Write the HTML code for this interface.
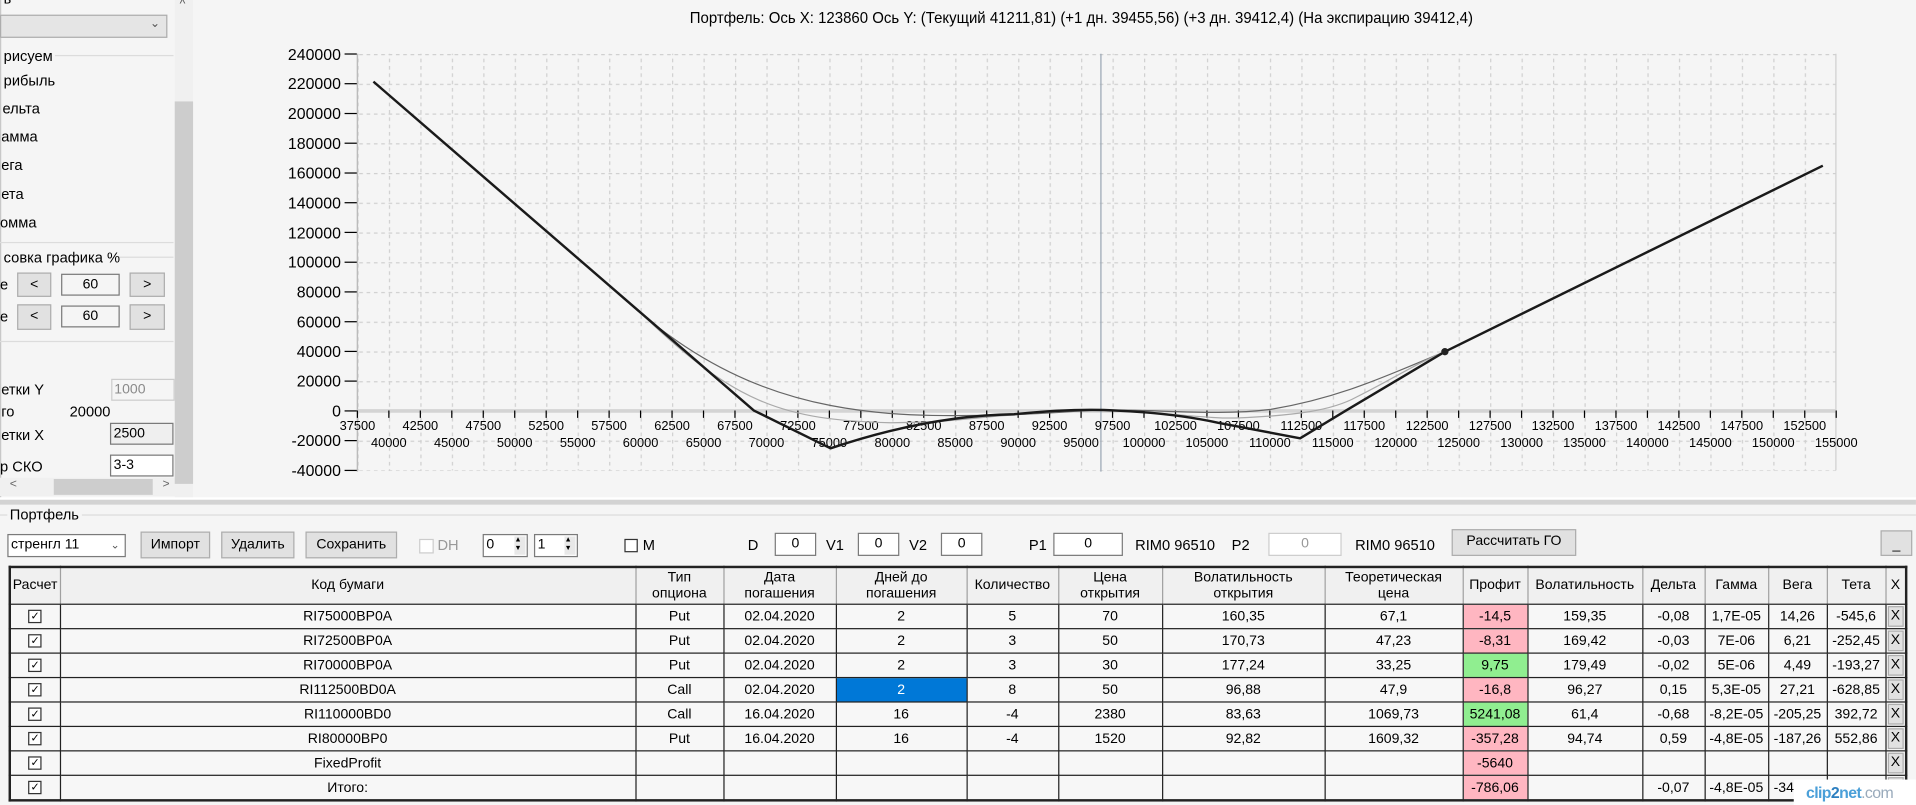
<!DOCTYPE html>
<html><head><meta charset="utf-8">
<style>
html,body{margin:0;padding:0;width:1916px;height:805px;overflow:hidden;background:#f5f5f5;}
.s{position:absolute;left:0;top:0;width:1568px;height:659px;transform:scale(1.2219);transform-origin:0 0;font-family:"Liberation Sans","DejaVu Sans",sans-serif;font-size:12px;color:#000;background:#f5f5f5;}
.a{position:absolute;white-space:nowrap;}
.btn{position:absolute;background:#e1e1e1;border:1px solid #adadad;box-sizing:border-box;text-align:center;font-size:11.5px;}
.inp{position:absolute;background:#fff;border:1px solid #7a7a7a;box-sizing:border-box;text-align:center;font-size:11.5px;}
.line{position:absolute;height:1px;background:#dcdcdc;}
table{position:absolute;left:7px;top:463px;border-collapse:collapse;table-layout:fixed;font-size:11.5px;border:2px solid #222;}
td{border:1px solid #222;text-align:center;padding:0;height:19px;line-height:14px;background:#f7f7f7;overflow:hidden;white-space:nowrap;}
tr.h td{background:#f0f0f0;height:29px;line-height:13px;border-color:#222 #a0a0a0;}
td.p{background:#ffb6c1;}
td.g{background:#90ee90;}
td.sel{background:#0078d7;color:#fff;}
td.x{padding:0 1px;}
td.x span{display:block;background:#e1e1e1;border:1px solid #adadad;height:15px;line-height:15px;}
.cb{display:inline-block;width:9px;height:9px;border:1px solid #333;background:#fff;font-size:9px;line-height:9px;vertical-align:middle;}
</style></head><body>
<div class="s">
<!-- left panel -->
<div class="a" style="left:0;top:0;width:143px;height:407px;background:#f5f5f5;"></div>
<div class="a" style="left:0;top:0;width:1px;height:407px;background:#c8c8c8;"></div>
<div class="a" style="left:3px;top:-8px;font-size:12px;">ь</div>
<div class="a" style="left:0;top:11.5px;width:137px;height:19px;background:#e5e5e5;border:1px solid #adadad;box-sizing:border-box;"><span style="position:absolute;right:5px;top:1px;font-size:10px;color:#555;">&#8964;</span></div>
<div class="line" style="left:45px;top:44.5px;width:97px;"></div>
<div class="a" style="left:3px;top:39px;">рисуем</div>
<div class="a" style="left:3px;top:59px;">рибыль</div>
<div class="a" style="left:2px;top:82px;">ельта</div>
<div class="a" style="left:1px;top:105px;">амма</div>
<div class="a" style="left:1px;top:128px;">ега</div>
<div class="a" style="left:1px;top:152px;">ета</div>
<div class="a" style="left:0px;top:175px;">омма</div>
<div class="line" style="left:0;top:198px;width:142px;"></div>
<div class="line" style="left:97px;top:210px;width:45px;"></div>
<div class="a" style="left:3px;top:204px;">совка графика %</div>
<div class="a" style="left:0px;top:226px;">е</div>
<div class="btn" style="left:14px;top:223px;width:28px;height:20px;line-height:18px;">&lt;</div>
<div class="inp" style="left:50px;top:224px;width:48px;height:18px;line-height:16px;background:#f5f5f5;">60</div>
<div class="btn" style="left:106px;top:223px;width:29px;height:20px;line-height:18px;">&gt;</div>
<div class="a" style="left:0px;top:252px;">е</div>
<div class="btn" style="left:14px;top:249px;width:28px;height:21px;line-height:19px;">&lt;</div>
<div class="inp" style="left:50px;top:250px;width:48px;height:18px;line-height:16px;background:#f5f5f5;">60</div>
<div class="btn" style="left:106px;top:249px;width:29px;height:21px;line-height:19px;">&gt;</div>
<div class="line" style="left:0;top:279px;width:142px;"></div>
<div class="a" style="left:1px;top:312px;">етки Y</div>
<div class="inp" style="left:90.5px;top:309.5px;width:52px;height:18px;line-height:16px;text-align:left;padding-left:2px;color:#8a8a8a;border-color:#ccc;background:#f5f5f5;">1000</div>
<div class="a" style="left:1px;top:330px;">го</div>
<div class="a" style="left:57px;top:330px;">20000</div>
<div class="a" style="left:1px;top:349px;">етки X</div>
<div class="inp" style="left:90px;top:346px;width:52px;height:18px;line-height:16px;text-align:left;padding-left:2px;background:#efefef;">2500</div>
<div class="a" style="left:0px;top:375px;">р СКО</div>
<div class="inp" style="left:90px;top:372px;width:52px;height:18px;line-height:16px;text-align:left;padding-left:2px;">3-3</div>
<div class="a" style="left:146px;top:374px;font-size:9px;color:#555;">&#8964;</div>
<div class="a" style="left:0;top:391px;width:143px;height:15px;background:#f0f0f0;"></div>
<div class="a" style="left:44px;top:392px;width:81px;height:13px;background:#cdcdcd;"></div>
<div class="a" style="left:8px;top:391px;font-size:10px;color:#666;">&lt;</div>
<div class="a" style="left:133px;top:391px;font-size:10px;color:#666;">&gt;</div>
<div class="a" style="left:143px;top:0;width:15px;height:407px;background:#f0f0f0;"></div>
<div class="a" style="left:143px;top:83px;width:15px;height:313px;background:#cdcdcd;"></div>
<div class="a" style="left:147px;top:-2px;font-size:10px;color:#555;">^</div>

<!-- chart -->
<svg class="a" style="left:0;top:0;" width="1568" height="410" viewBox="0 0 1568 410">
<defs>
<pattern id="gv" x="292.5" y="0" width="25.75" height="6" patternUnits="userSpaceOnUse"><line x1="0.5" y1="0" x2="0.5" y2="3" stroke="#d0d0d0" stroke-width="1"/></pattern>
<pattern id="gh" x="0" y="44.2" width="6" height="24.34" patternUnits="userSpaceOnUse"><line x1="0" y1="0.5" x2="3" y2="0.5" stroke="#d0d0d0" stroke-width="1"/></pattern>
</defs>
<text x="885" y="19" text-anchor="middle" font-family="Liberation Sans, sans-serif" font-size="12.5" textLength="641" lengthAdjust="spacingAndGlyphs">Портфель: Ось X: 123860 Ось Y:  (Текущий 41211,81)  (+1 дн. 39455,56)  (+3 дн. 39412,4)  (На экспирацию 39412,4)</text>
<rect x="292.5" y="44" width="1210" height="341" fill="url(#gv)"/>
<rect x="292.5" y="44" width="1210" height="341.5" fill="url(#gh)"/>
<line x1="1502.5" y1="44" x2="1502.5" y2="385" stroke="#d0d0d0"/>
<line x1="292.5" y1="44" x2="292.5" y2="386" stroke="#bbb" stroke-width="1.2"/>
<line x1="292.5" y1="336.3" x2="1502.5" y2="336.3" stroke="#d4d4d4" stroke-width="3"/>
<line x1="901" y1="44" x2="901" y2="386" stroke="#9aa6b4" stroke-width="1"/>
<g stroke="#000" stroke-width="1">
<line x1="282" y1="44.2" x2="292" y2="44.2"/><line x1="282" y1="68.5" x2="292" y2="68.5"/><line x1="282" y1="92.9" x2="292" y2="92.9"/><line x1="282" y1="117.2" x2="292" y2="117.2"/><line x1="282" y1="141.6" x2="292" y2="141.6"/><line x1="282" y1="165.9" x2="292" y2="165.9"/><line x1="282" y1="190.2" x2="292" y2="190.2"/><line x1="282" y1="214.6" x2="292" y2="214.6"/><line x1="282" y1="238.9" x2="292" y2="238.9"/><line x1="282" y1="263.3" x2="292" y2="263.3"/><line x1="282" y1="287.6" x2="292" y2="287.6"/><line x1="282" y1="311.9" x2="292" y2="311.9"/><line x1="282" y1="336.3" x2="292" y2="336.3"/><line x1="282" y1="360.6" x2="292" y2="360.6"/><line x1="282" y1="385" x2="292" y2="385"/>
</g>
<g font-family="Liberation Sans, sans-serif" font-size="13" text-anchor="end">
<text x="279" y="49">240000</text><text x="279" y="73">220000</text><text x="279" y="97.5">200000</text><text x="279" y="122">180000</text><text x="279" y="146">160000</text><text x="279" y="170.5">140000</text><text x="279" y="195">120000</text><text x="279" y="219">100000</text><text x="279" y="243.5">80000</text><text x="279" y="268">60000</text><text x="279" y="292">40000</text><text x="279" y="316.5">20000</text><text x="279" y="341">0</text><text x="279" y="365">-20000</text><text x="279" y="389.5">-40000</text>
</g>
<path d="M292.5,336v6 M318.25,336v6 M344,336v6 M369.75,336v6 M395.5,336v6 M421.25,336v6 M447,336v6 M472.75,336v6 M498.5,336v6 M524.25,336v6 M550,336v6 M575.75,336v6 M601.5,336v6 M627.25,336v6 M653,336v6 M678.75,336v6 M704.5,336v6 M730.25,336v6 M756,336v6 M781.75,336v6 M807.5,336v6 M833.25,336v6 M859,336v6 M884.75,336v6 M910.5,336v6 M936.25,336v6 M962,336v6 M987.75,336v6 M1013.5,336v6 M1039.25,336v6 M1065,336v6 M1090.75,336v6 M1116.5,336v6 M1142.25,336v6 M1168,336v6 M1193.75,336v6 M1219.5,336v6 M1245.25,336v6 M1271,336v6 M1296.75,336v6 M1322.5,336v6 M1348.25,336v6 M1374,336v6 M1399.75,336v6 M1425.5,336v6 M1451.25,336v6 M1477,336v6 M1502.75,336v6" stroke="#000" stroke-width="1"/>
<g font-family="Liberation Sans, sans-serif" font-size="10.5" text-anchor="middle">
<text x="292.5" y="352">37500</text><text x="344" y="352">42500</text><text x="395.5" y="352">47500</text><text x="447" y="352">52500</text><text x="498.5" y="352">57500</text><text x="550" y="352">62500</text><text x="601.5" y="352">67500</text><text x="653" y="352">72500</text><text x="704.5" y="352">77500</text><text x="756" y="352">82500</text><text x="807.5" y="352">87500</text><text x="859" y="352">92500</text><text x="910.5" y="352">97500</text><text x="962" y="352">102500</text><text x="1013.5" y="352">107500</text><text x="1065" y="352">112500</text><text x="1116.5" y="352">117500</text><text x="1168" y="352">122500</text><text x="1219.5" y="352">127500</text><text x="1271" y="352">132500</text><text x="1322.5" y="352">137500</text><text x="1374" y="352">142500</text><text x="1425.5" y="352">147500</text><text x="1477" y="352">152500</text>
<text x="318.25" y="366">40000</text><text x="369.75" y="366">45000</text><text x="421.25" y="366">50000</text><text x="472.75" y="366">55000</text><text x="524.25" y="366">60000</text><text x="575.75" y="366">65000</text><text x="627.25" y="366">70000</text><text x="678.75" y="366">75000</text><text x="730.25" y="366">80000</text><text x="781.75" y="366">85000</text><text x="833.25" y="366">90000</text><text x="884.75" y="366">95000</text><text x="936.25" y="366">100000</text><text x="987.75" y="366">105000</text><text x="1039.25" y="366">110000</text><text x="1090.75" y="366">115000</text><text x="1142.25" y="366">120000</text><text x="1193.75" y="366">125000</text><text x="1245.25" y="366">130000</text><text x="1296.75" y="366">135000</text><text x="1348.25" y="366">140000</text><text x="1399.75" y="366">145000</text><text x="1451.25" y="366">150000</text><text x="1502.75" y="366">155000</text>
</g>
<path d="M500,235 C570,300 640,338 763,340 C850,341 880,335 913,335.5 C960,336 1000,340 1040,335 C1100,325 1140,305 1182.5,287.8" fill="none" stroke="#666" stroke-width="1"/>
<path d="M520,252 C600,330 640,344 730,346 C780,346 810,340 830,339.6 C870,336 890,335 913,336 C960,338 990,343 1014,342 C1060,340 1090,336 1110,325 C1140,310 1160,297 1182,288" fill="none" stroke="#aaa" stroke-width="1"/>
<path d="M305.6,66.8 L617,336 L679.7,366.9 Q760,340 830,339 Q880,334 913,336 Q960,338 997,346 L1064,358.7 L1101.5,336 L1182.5,287.8 L1491.8,135.6" fill="none" stroke="#1a1a1a" stroke-width="2" stroke-linejoin="round"/>
<circle cx="1182.5" cy="287.8" r="3" fill="#222"/>
</svg>

<!-- separator -->
<div class="a" style="left:0;top:407px;width:1568px;height:2px;background:#fff;"></div>
<div class="a" style="left:0;top:409px;width:1568px;height:4px;background:#d3d3d3;"></div>
<div class="line" style="left:0;top:421px;width:1568px;"></div>
<div class="a" style="left:6px;top:414px;padding:0 2px;background:#f5f5f5;">Портфель</div>

<!-- toolbar -->
<div class="inp" style="left:6px;top:437px;width:97px;height:19px;line-height:17px;text-align:left;padding-left:2px;">стренгл 11<span style="position:absolute;right:4px;top:0;font-size:9px;color:#555;">&#8964;</span></div>
<div class="btn" style="left:115px;top:435px;width:57px;height:22px;line-height:20px;">Импорт</div>
<div class="btn" style="left:181px;top:435px;width:60px;height:22px;line-height:20px;">Удалить</div>
<div class="btn" style="left:250px;top:435px;width:75px;height:22px;line-height:20px;">Сохранить</div>
<div class="a" style="left:343px;top:441px;width:10px;height:10px;border:1px solid #ccc;background:#fff;"></div>
<div class="a" style="left:358px;top:439px;color:#999;">DH</div>
<div class="inp" style="left:395px;top:437px;width:37px;height:19px;line-height:17px;text-align:left;padding-left:2px;">0<span style="position:absolute;right:1px;top:1px;width:9px;height:15px;background:#e8e8e8;font-size:6px;line-height:7px;">▲<br>▼</span></div>
<div class="inp" style="left:437px;top:437px;width:36px;height:19px;line-height:17px;text-align:left;padding-left:2px;">1<span style="position:absolute;right:1px;top:1px;width:9px;height:15px;background:#e8e8e8;font-size:6px;line-height:7px;">▲<br>▼</span></div>
<div class="a" style="left:511px;top:441px;width:9px;height:9px;border:1px solid #333;background:#fff;"></div>
<div class="a" style="left:526px;top:439px;">M</div>
<div class="a" style="left:612px;top:439px;">D</div>
<div class="inp" style="left:634px;top:436px;width:34px;height:19px;line-height:17px;">0</div>
<div class="a" style="left:676px;top:439px;">V1</div>
<div class="inp" style="left:702px;top:436px;width:34px;height:19px;line-height:17px;">0</div>
<div class="a" style="left:744px;top:439px;">V2</div>
<div class="inp" style="left:770px;top:436px;width:34px;height:19px;line-height:17px;">0</div>
<div class="a" style="left:842px;top:439px;">P1</div>
<div class="inp" style="left:862px;top:436px;width:57px;height:19px;line-height:17px;">0</div>
<div class="a" style="left:929px;top:439px;">RIM0 96510</div>
<div class="a" style="left:1008px;top:439px;">P2</div>
<div class="inp" style="left:1038px;top:436px;width:60px;height:19px;line-height:17px;color:#999;border-color:#ccc;">0</div>
<div class="a" style="left:1109px;top:439px;">RIM0 96510</div>
<div class="btn" style="left:1188px;top:433px;width:102px;height:22px;line-height:19px;">Рассчитать ГО</div>
<div class="btn" style="left:1539px;top:434px;width:26px;height:21px;line-height:22px;">_</div>

<!-- table -->
<table>
<colgroup><col style="width:41px"><col style="width:471px"><col style="width:72px"><col style="width:92px"><col style="width:107px"><col style="width:75px"><col style="width:85px"><col style="width:133px"><col style="width:113px"><col style="width:53px"><col style="width:94px"><col style="width:51px"><col style="width:52px"><col style="width:48px"><col style="width:48px"><col style="width:17px"></colgroup>
<tr class="h"><td>Расчет</td><td>Код бумаги</td><td>Тип<br>опциона</td><td>Дата<br>погашения</td><td>Дней до<br>погашения</td><td>Количество</td><td>Цена<br>открытия</td><td>Волатильность<br>открытия</td><td>Теоретическая<br>цена</td><td>Профит</td><td>Волатильность</td><td>Дельта</td><td>Гамма</td><td>Вега</td><td>Тета</td><td>X</td></tr>
<tr><td><span class="cb">✓</span></td><td>RI75000BP0A</td><td>Put</td><td>02.04.2020</td><td>2</td><td>5</td><td>70</td><td>160,35</td><td>67,1</td><td class="p">-14,5</td><td>159,35</td><td>-0,08</td><td>1,7E-05</td><td>14,26</td><td>-545,6</td><td class="x"><span>X</span></td></tr>
<tr><td><span class="cb">✓</span></td><td>RI72500BP0A</td><td>Put</td><td>02.04.2020</td><td>2</td><td>3</td><td>50</td><td>170,73</td><td>47,23</td><td class="p">-8,31</td><td>169,42</td><td>-0,03</td><td>7E-06</td><td>6,21</td><td>-252,45</td><td class="x"><span>X</span></td></tr>
<tr><td><span class="cb">✓</span></td><td>RI70000BP0A</td><td>Put</td><td>02.04.2020</td><td>2</td><td>3</td><td>30</td><td>177,24</td><td>33,25</td><td class="g">9,75</td><td>179,49</td><td>-0,02</td><td>5E-06</td><td>4,49</td><td>-193,27</td><td class="x"><span>X</span></td></tr>
<tr><td><span class="cb">✓</span></td><td>RI112500BD0A</td><td>Call</td><td>02.04.2020</td><td class="sel">2</td><td>8</td><td>50</td><td>96,88</td><td>47,9</td><td class="p">-16,8</td><td>96,27</td><td>0,15</td><td>5,3E-05</td><td>27,21</td><td>-628,85</td><td class="x"><span>X</span></td></tr>
<tr><td><span class="cb">✓</span></td><td>RI110000BD0</td><td>Call</td><td>16.04.2020</td><td>16</td><td>-4</td><td>2380</td><td>83,63</td><td>1069,73</td><td class="g">5241,08</td><td>61,4</td><td>-0,68</td><td>-8,2E-05</td><td>-205,25</td><td>392,72</td><td class="x"><span>X</span></td></tr>
<tr><td><span class="cb">✓</span></td><td>RI80000BP0</td><td>Put</td><td>16.04.2020</td><td>16</td><td>-4</td><td>1520</td><td>92,82</td><td>1609,32</td><td class="p">-357,28</td><td>94,74</td><td>0,59</td><td>-4,8E-05</td><td>-187,26</td><td>552,86</td><td class="x"><span>X</span></td></tr>
<tr><td><span class="cb">✓</span></td><td>FixedProfit</td><td></td><td></td><td></td><td></td><td></td><td></td><td></td><td class="p">-5640</td><td></td><td></td><td></td><td></td><td></td><td class="x"><span>X</span></td></tr>
<tr><td><span class="cb">✓</span></td><td>Итого:</td><td></td><td></td><td></td><td></td><td></td><td></td><td></td><td class="p">-786,06</td><td></td><td>-0,07</td><td>-4,8E-05</td><td>-342,04</td><td>371,59</td><td class="x"><span>X</span></td></tr>
</table>
<div class="a" style="left:1468px;top:638px;width:100px;height:21px;background:#fff;"></div>
<div class="a" style="left:1478px;top:641px;font-size:13px;font-weight:bold;color:#4a9fd8;letter-spacing:-0.5px;">clip<span style="color:#2c7fc0">2</span>net<span style="font-weight:normal;color:#9ab">.com</span></div>
</div>
</body></html>
